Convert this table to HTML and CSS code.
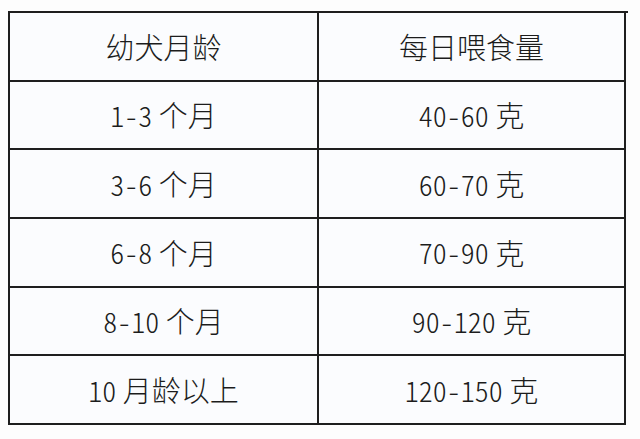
FILE: index.html
```html
<!DOCTYPE html>
<html lang="zh-CN">
<head>
<meta charset="utf-8">
<link rel="stylesheet" href="styles.css">
</head>
<body>
<div class="table">
  <div class="cell">幼犬月龄</div>
  <div class="cell">每日喂食量</div>
  <div class="cell"><span class="num">1-3</span> 个月</div>
  <div class="cell"><span class="num">40-60</span> 克</div>
  <div class="cell"><span class="num">3-6</span> 个月</div>
  <div class="cell"><span class="num">60-70</span> 克</div>
  <div class="cell"><span class="num">6-8</span> 个月</div>
  <div class="cell"><span class="num">70-90</span> 克</div>
  <div class="cell"><span class="num">8-10</span> 个月</div>
  <div class="cell"><span class="num">90-120</span> 克</div>
  <div class="cell"><span class="num">10</span> 月龄以上</div>
  <div class="cell"><span class="num">120-150</span> 克</div>
</div>
</body>
</html>
```

FILE: styles.css
```css
html, body {
  margin: 0;
  padding: 0;
  background: #fdfdfd;
}

body {
  width: 640px;
  height: 439px;
  overflow: hidden;
  font-family: "Noto Sans CJK SC", "Noto Sans", sans-serif;
  font-weight: 300;
  color: #1c1c1c;
}

.table {
  margin: 11px 0 0 8px;
  width: 618px;
  height: 412px;
  box-sizing: content-box;
  border-left: 2px solid #1e1e1e;
  border-top: 2px solid #1e1e1e;
  display: grid;
  grid-template-columns: 309px 307px;
  grid-template-rows: repeat(6, 1fr);
  background: #fbfcfe;
}

.cell {
  border-right: 2px solid #1e1e1e;
  border-bottom: 2px solid #1e1e1e;
  display: flex;
  align-items: center;
  justify-content: center;
  font-size: 29px;
  line-height: 1;
  white-space: pre;
}

.num {
  font-feature-settings: "hwid" 1;
  font-size: 28px;
}
```
